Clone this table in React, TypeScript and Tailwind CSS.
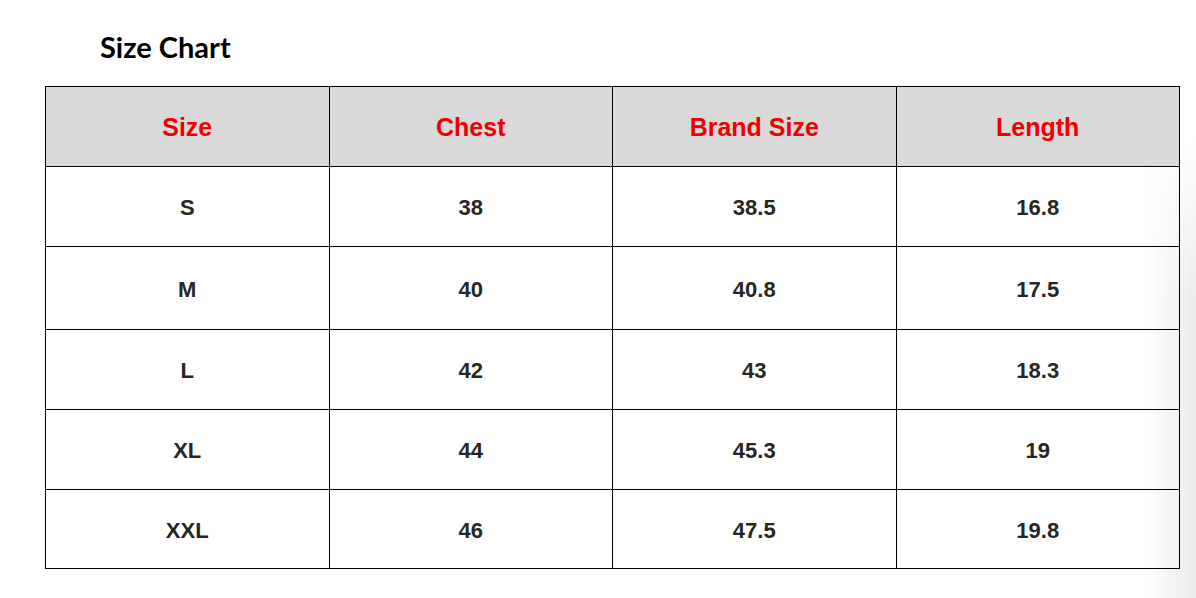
const rows = [
  { size: 'S', chest: '38', brand: '38.5', length: '16.8', h: 'h-[80px]' },
  { size: 'M', chest: '40', brand: '40.8', length: '17.5', h: 'h-[83px]' },
  { size: 'L', chest: '42', brand: '43', length: '18.3', h: 'h-[80px]' },
  { size: 'XL', chest: '44', brand: '45.3', length: '19', h: 'h-[80px]' },
  { size: 'XXL', chest: '46', brand: '47.5', length: '19.8', h: 'h-[79px]' },
];

const headers = ['Size', 'Chest', 'Brand Size', 'Length'];

const App = () => {
  return (
    <div className="relative w-[1196px] h-[598px] bg-white overflow-hidden">
      {/* soft shadow on the right edge, sits behind the table */}
      <div className="pointer-events-none absolute right-0 top-[140px] bottom-0 w-[50px] bg-gradient-to-r from-transparent to-[#ebebeb] [mask-image:linear-gradient(to_bottom,transparent,black_35%)]" />

      {/* Title */}
      <div className="relative h-[86px] pl-[100px] pt-[30px]">
        <h1 className="text-[29px] leading-[34px] font-bold text-black font-['Lato',sans-serif]">Size Chart</h1>
      </div>

      {/* Table */}
      <table className="relative ml-[45px] w-[1135px] table-fixed border-collapse font-['Liberation_Sans',Arial,sans-serif]">
        <thead>
          <tr className="h-[80px] bg-[#d9d9d9]">
            {headers.map((h) => (
              <th key={h} className="border border-black pt-[2px] text-center text-[25px] font-bold text-[#ee0000]">
                {h}
              </th>
            ))}
          </tr>
        </thead>
        <tbody>
          {rows.map((r) => (
            <tr key={r.size} className={r.h}>
              <td className="border border-black pt-[2px] text-center text-[22px] font-bold text-[#262626]">{r.size}</td>
              <td className="border border-black pt-[2px] text-center text-[22px] font-bold text-[#262626]">{r.chest}</td>
              <td className="border border-black pt-[2px] text-center text-[22px] font-bold text-[#262626]">{r.brand}</td>
              <td className="border border-black pt-[2px] text-center text-[22px] font-bold text-[#262626]">{r.length}</td>
            </tr>
          ))}
        </tbody>
      </table>
    </div>
  );
};

export default App;
